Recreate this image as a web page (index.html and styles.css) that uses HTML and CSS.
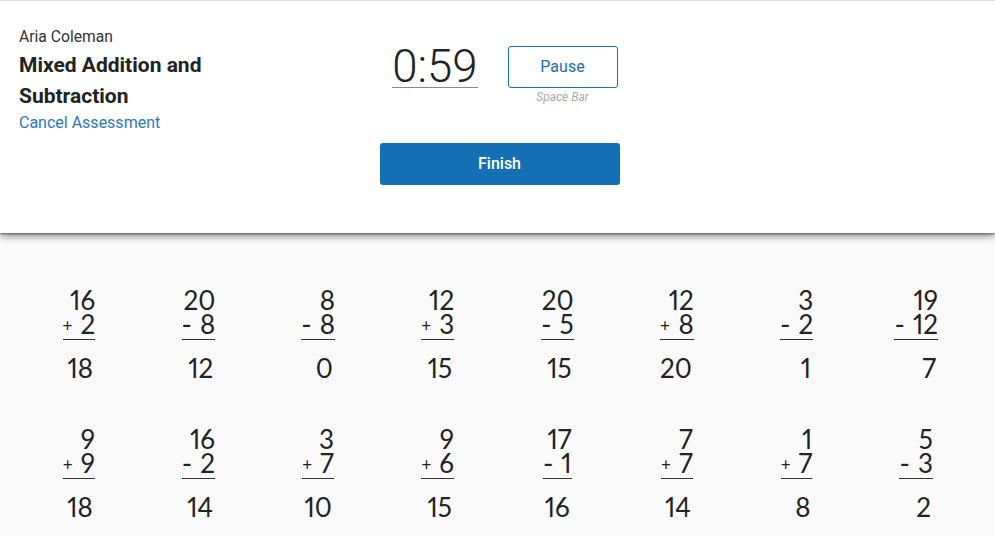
FILE: index.html
```html
<!DOCTYPE html>
<html lang="en">
<head>
<meta charset="UTF-8">
<meta name="viewport" content="width=device-width, initial-scale=1.0">
<title>Mixed Addition and Subtraction</title>
<link rel="stylesheet" href="styles.css">
</head>
<body>

<!-- Header -->
<div class="header">
  <div class="student">
    <div class="student-name">Aria Coleman</div>
    <h1 class="title">Mixed Addition and Subtraction</h1>
    <a class="cancel" href="#">Cancel Assessment</a>
  </div>

  <div class="controls">
    <div class="timer-row">
      <div class="timer">0:59</div>
      <div class="pause-wrap">
        <button class="pause" type="button">Pause</button>
        <div class="hint">Space Bar</div>
      </div>
    </div>
    <button class="finish" type="button">Finish</button>
  </div>

  <div class="spacer"></div>
</div>

<!-- Problems -->
<div class="sheet">
  <div class="cell"><div class="problem"><div class="num">16</div><div class="op-row"><span class="op plus">+</span><span>2</span></div><div class="answer">18</div></div></div>
  <div class="cell"><div class="problem"><div class="num">20</div><div class="op-row"><span class="op minus">-</span><span>8</span></div><div class="answer">12</div></div></div>
  <div class="cell"><div class="problem"><div class="num">8</div><div class="op-row"><span class="op minus">-</span><span>8</span></div><div class="answer">0</div></div></div>
  <div class="cell"><div class="problem"><div class="num">12</div><div class="op-row"><span class="op plus">+</span><span>3</span></div><div class="answer">15</div></div></div>
  <div class="cell"><div class="problem"><div class="num">20</div><div class="op-row"><span class="op minus">-</span><span>5</span></div><div class="answer">15</div></div></div>
  <div class="cell"><div class="problem"><div class="num">12</div><div class="op-row"><span class="op plus">+</span><span>8</span></div><div class="answer">20</div></div></div>
  <div class="cell"><div class="problem"><div class="num">3</div><div class="op-row"><span class="op minus">-</span><span>2</span></div><div class="answer">1</div></div></div>
  <div class="cell"><div class="problem"><div class="num">19</div><div class="op-row"><span class="op minus">-</span><span>12</span></div><div class="answer">7</div></div></div>

  <div class="cell"><div class="problem"><div class="num">9</div><div class="op-row"><span class="op plus">+</span><span>9</span></div><div class="answer">18</div></div></div>
  <div class="cell"><div class="problem"><div class="num">16</div><div class="op-row"><span class="op minus">-</span><span>2</span></div><div class="answer">14</div></div></div>
  <div class="cell"><div class="problem"><div class="num">3</div><div class="op-row"><span class="op plus">+</span><span>7</span></div><div class="answer">10</div></div></div>
  <div class="cell"><div class="problem"><div class="num">9</div><div class="op-row"><span class="op plus">+</span><span>6</span></div><div class="answer">15</div></div></div>
  <div class="cell"><div class="problem"><div class="num">17</div><div class="op-row"><span class="op minus">-</span><span>1</span></div><div class="answer">16</div></div></div>
  <div class="cell"><div class="problem"><div class="num">7</div><div class="op-row"><span class="op plus">+</span><span>7</span></div><div class="answer">14</div></div></div>
  <div class="cell"><div class="problem"><div class="num">1</div><div class="op-row"><span class="op plus">+</span><span>7</span></div><div class="answer">8</div></div></div>
  <div class="cell"><div class="problem"><div class="num">5</div><div class="op-row"><span class="op minus">-</span><span>3</span></div><div class="answer">2</div></div></div>
</div>

</body>
</html>
```

FILE: styles.css
```css
/* Page */
body {
  margin: 0;
  background-color: #fafafa;
  font-family: Roboto, "Liberation Sans", sans-serif;
  color: #222;
}

/* Header */
.header {
  position: relative;
  z-index: 1;
  display: grid;
  grid-template-columns: 1fr 240px 1fr;
  height: 232px;
  background-color: #fff;
  border-top: 1px solid #dcdcdc;
  box-shadow: 0 3px 8px rgba(0,0,0,0.45), 0 1px 2px rgba(0,0,0,0.45);
}

.student {
  padding: 26px 0 0 19px;
}

.student-name {
  font-size: 15.7px;
  line-height: 20px;
  color: #333;
}

.title {
  width: 220px;
  margin: 3px 0 0 0;
  font-size: 21px;
  line-height: 31px;
  font-weight: 700;
  color: #222;
}

.cancel {
  display: block;
  padding-top: 1px;
  font-size: 16px;
  line-height: 20px;
  color: #2a78c0;
  text-decoration: none;
}

/* Timer and buttons */
.controls {
  padding-top: 45px;
  margin-left: 2px;
}

.timer-row {
  display: flex;
  justify-content: flex-end;
  align-items: flex-start;
  gap: 30px;
}

.timer {
  margin-top: 1px;
  font-size: 45.5px;
  font-weight: 300;
  line-height: 40px;
  color: #222;
  border-bottom: 1px solid #8a8a8a;
}

.pause-wrap {
  display: flex;
  flex-direction: column;
  align-items: center;
}

.pause {
  width: 110px;
  height: 42px;
  padding-bottom: 2px;
  background-color: #fff;
  border: 1px solid #1a6db3;
  border-radius: 3px;
  font-family: Roboto, sans-serif;
  font-size: 16px;
  color: #1a6db3;
  cursor: pointer;
}

.hint {
  margin-top: 2px;
  font-size: 12px;
  line-height: 14px;
  font-style: italic;
  color: #aaa;
}

.finish {
  display: block;
  width: 240px;
  height: 42px;
  margin-top: 39px;
  padding-bottom: 2px;
  background-color: #156fb5;
  border: none;
  border-radius: 3px;
  font-family: Roboto, sans-serif;
  font-size: 16px;
  font-weight: 500;
  color: #fff;
  cursor: pointer;
}

/* Problem sheet */
.sheet {
  display: grid;
  grid-template-columns: repeat(8, 1fr);
  row-gap: 47px;
  padding: 55px 19px 0 19px;
  font-family: Lato, "Liberation Sans", sans-serif;
  font-size: 26px;
  line-height: 24px;
  color: #222;
  font-variant-numeric: proportional-nums;
}

.cell {
  display: flex;
  justify-content: center;
}

.problem {
  display: flex;
  flex-direction: column;
  text-align: right;
}

.op-row {
  display: flex;
  justify-content: space-between;
  height: 24px;
  padding-bottom: 3px;
  border-bottom: 1px solid #333;
}

.op {
  margin-right: 8px;
  line-height: 24px;
}

.op.plus {
  padding-top: 2px;
  font-size: 17px;
}

.op.minus {
  font-size: 28px;
}

.answer {
  margin-top: 16px;
  padding-right: 2px;
}
```
